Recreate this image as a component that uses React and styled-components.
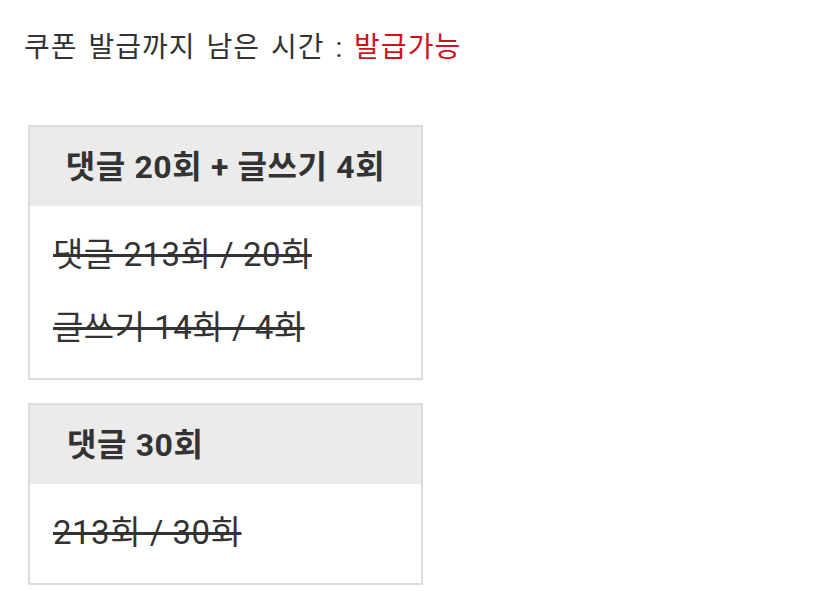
import React from "react";
import styled, { createGlobalStyle } from "styled-components";

const GlobalStyle = createGlobalStyle`
  html, body {
    margin: 0;
    padding: 0;
    background: #fff;
  }
  body {
    font-family: Roboto, "Noto Sans CJK KR", sans-serif;
    color: #333;
  }
`;

const missions = [
  {
    title: "댓글 20회 + 글쓰기 4회",
    center: true,
    rows: ["댓글 213회 / 20회", "글쓰기 14회 / 4회"],
  },
  {
    title: "댓글 30회",
    center: false,
    rows: ["213회 / 30회"],
  },
];

function CouponStatus() {
  return (
    <Page>
      <Remaining>
        쿠폰 발급까지 남은 시간 : <Available>발급가능</Available>
      </Remaining>
      <CardList>
        {missions.map((m) => (
          <Card key={m.title}>
            <CardHeader $center={m.center}>{m.title}</CardHeader>
            <CardBody>
              {m.rows.map((r) => (
                <Done key={r}>{r}</Done>
              ))}
            </CardBody>
          </Card>
        ))}
      </CardList>
    </Page>
  );
}

const Page = styled.div`
  padding: 26px 0 0 24px;
`;

const Remaining = styled.div`
  font-size: 28px;
  line-height: 44px;
  letter-spacing: 1px;
  word-spacing: 3px;
  color: #333;
`;

const Available = styled.span`
  color: #d0111b;
`;

const CardList = styled.div`
  display: flex;
  flex-direction: column;
  gap: 23px;
  margin-top: 55px;
  padding-left: 4px;
`;

const Card = styled.div`
  width: 391px;
  border: 2px solid #dcdcdc;
  background: #fff;
`;

const CardHeader = styled.div`
  box-sizing: border-box;
  height: 79px;
  padding-bottom: 5px;
  background: #ebebeb;
  display: flex;
  align-items: center;
  justify-content: ${(p) => (p.$center ? "center" : "flex-start")};
  padding-left: ${(p) => (p.$center ? "0" : "37px")};
  white-space: nowrap;
  font-size: 32px;
  font-weight: 700;
  letter-spacing: 0.6px;
  color: #333;
`;

const CardBody = styled.div`
  display: flex;
  flex-direction: column;
  gap: 23px;
  padding: 24px 23px 25px;
`;

const Done = styled.div`
  font-size: 33px;
  line-height: 50px;
  letter-spacing: 0.5px;
  color: #333;
  text-decoration: line-through;
  text-decoration-thickness: 3px;
`;

export default function App() {
  return (
    <>
      <GlobalStyle />
      <CouponStatus />
    </>
  );
}
